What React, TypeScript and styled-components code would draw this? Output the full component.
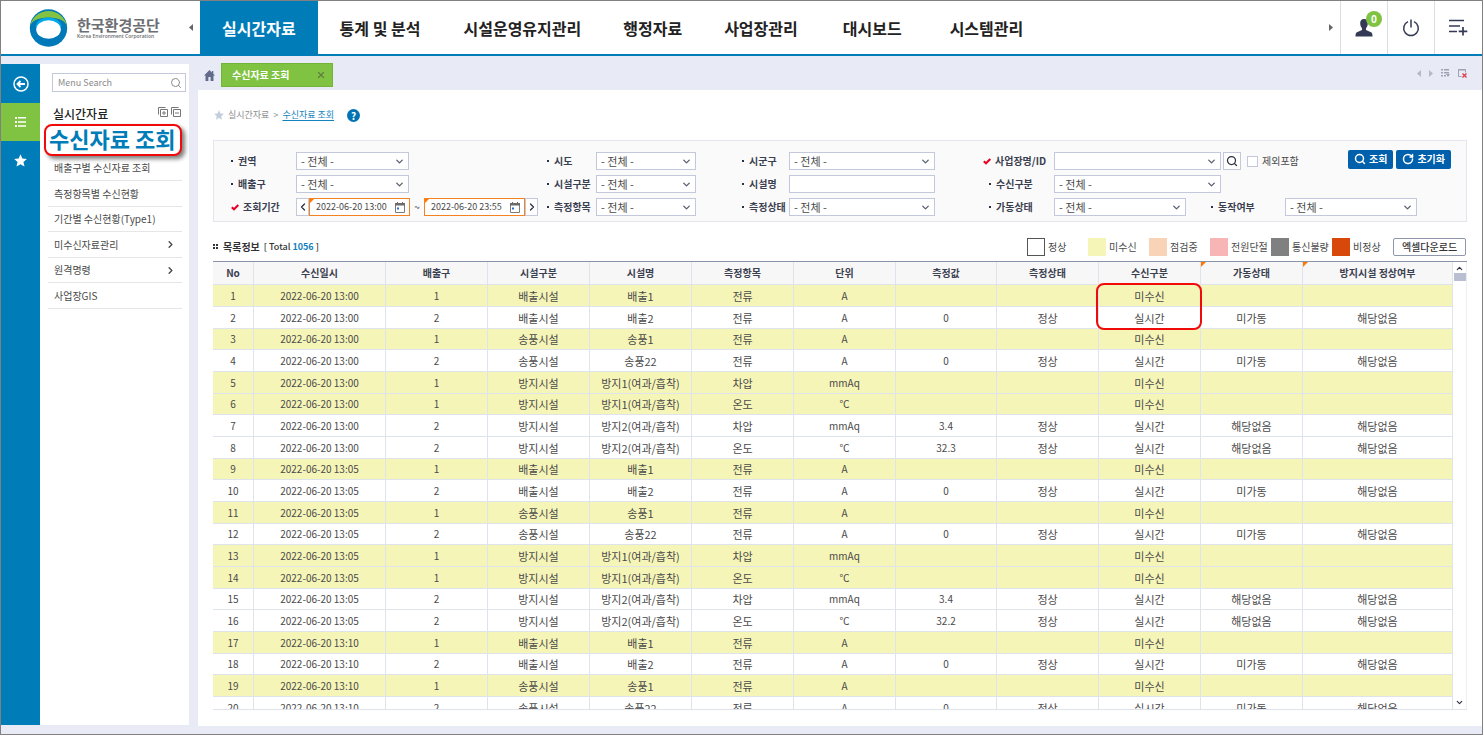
import React from 'react';
import styled, { createGlobalStyle, css } from 'styled-components';
import { ChevronDown, ChevronLeft, ChevronRight, ChevronUp, RotateCw, Search, X } from 'lucide-react';

const c = {
  blue: '#007cb8',
  link: '#1482bd',
  action: '#0060ab',
  green: '#80c342',
  lavender: '#e8ebf5',
  line: '#dfe3ec',
  field: '#c3c8dc',
  ink: '#2b3042',
  text: '#4a4a4a',
  orange: '#f58220',
  yellow: '#f6f5b8',
  navy: '#343a55',
};

const GlobalStyle = createGlobalStyle`
  *, *::before, *::after { box-sizing: border-box; }
  body {
    margin: 0;
    font-family: 'Noto Sans CJK KR', sans-serif;
    font-size: 10px;
    line-height: 16px;
    color: ${c.text};
    background: ${c.lavender};
  }
  button, input, select { font: inherit; color: inherit; margin: 0; }
  button { border: 0; padding: 0; background: none; cursor: pointer; }
  a { color: inherit; text-decoration: none; }
  ul { list-style: none; margin: 0; padding: 0; }
  svg { display: block; flex: none; }
`;

const Frame = styled.div`
  display: flex;
  flex-direction: column;
  height: 100vh;
  border: 1px solid #808080;
  background: ${c.lavender};
  overflow: hidden;
`;

/* ---------- header ---------- */
const Header = styled.header`
  display: flex;
  flex: none;
  height: 55px;
  padding-right: 1px;
  background: #fff;
  border-bottom: 2px solid ${c.blue};
`;

const Brand = styled.a`
  display: flex;
  align-items: center;
  gap: 9px;
  width: 181px;
  padding-left: 28px;
`;

const BrandText = styled.span`
  display: flex;
  flex-direction: column;
`;

const BrandName = styled.strong`
  font-size: 15px;
  line-height: 16px;
  color: #6d6e71;
`;

const BrandSub = styled.span`
  font: 600 5px/6px 'Open Sans', sans-serif;
  color: #6d6e71;
  white-space: nowrap;
`;

const ArrowButton = styled.button`
  display: grid;
  place-items: center;
  width: 18px;
`;

const Nav = styled.nav`
  display: flex;
  flex: 1;
`;

const NavLink = styled.a<{ $active?: boolean; $pad: number }>`
  display: flex;
  align-items: center;
  padding: 0 ${(p) => p.$pad}px;
  font-size: 16px;
  font-weight: 700;
  color: ${(p) => (p.$active ? '#fff' : '#222')};
  background: ${(p) => (p.$active ? c.blue : 'transparent')};
  white-space: nowrap;
`;

const HeaderTool = styled.button`
  position: relative;
  display: grid;
  place-items: center;
  width: 47px;
  border-left: 1px solid #dcdde3;
`;

const Badge = styled.span`
  position: absolute;
  top: 10px;
  right: 5px;
  width: 16px;
  height: 16px;
  border-radius: 50%;
  background: ${c.green};
  color: #fff;
  font-size: 10px;
  font-weight: 700;
  line-height: 15px;
`;

/* ---------- left side ---------- */
const Body = styled.div`
  display: flex;
  flex: 1;
  min-height: 0;
  padding-bottom: 8px;
`;

const Rail = styled.div`
  flex: none;
  width: 39px;
  margin: 8px 0 1px;
  padding-top: 1px;
  background: ${c.blue};
`;

const RailButton = styled.button<{ $active?: boolean }>`
  display: grid;
  place-items: center;
  width: 100%;
  height: 38px;
  color: #fff;
  background: ${(p) => (p.$active ? c.green : 'transparent')};
`;

const Sidebar = styled.aside`
  flex: none;
  width: 149px;
  margin: 8px 0 1px;
  padding: 9px 3px 0 8px;
  background: #fff;
`;

const MenuSearch = styled.label`
  display: flex;
  align-items: center;
  height: 19px;
  margin-left: 4px;
  padding: 0 3px 0 5px;
  border: 1px solid ${c.field};
  color: #8b8b8b;
`;

const MenuInput = styled.input`
  flex: 1;
  min-width: 0;
  height: 17px;
  padding: 0;
  border: 0;
  outline: 0;
  background: none;
  font-size: 9px;
  &::placeholder { color: #8b8b8b; opacity: 1; }
`;

const MenuHead = styled.div`
  display: flex;
  align-items: center;
  height: 20px;
  margin-top: 12px;
  padding: 0 5px;
`;

const MenuTitle = styled.h2`
  flex: 1;
  margin: 0;
  font-size: 12px;
  font-weight: 500;
  color: #222;
`;

const SmallTools = styled.div`
  display: flex;
  gap: 3px;
  padding-bottom: 4px;
`;

const CurrentMenu = styled.a`
  display: flex;
  align-items: center;
  height: 32px;
  margin: 0 4px 0 -4px;
  padding: 0 0 4px 3px;
  border: 2px solid #f00a0a;
  border-radius: 8px;
  background: #fff;
  box-shadow: 3px 3px 4px rgba(0, 0, 0, 0.5);
  font-size: 22px;
  font-weight: 700;
  color: ${c.blue};
  white-space: nowrap;
`;

const MenuItem = styled.li`
  display: flex;
  align-items: center;
  justify-content: space-between;
  height: 25px;
  margin-right: 4px;
  padding: 0 6px;
  border-bottom: 1px solid #e6e6e8;
  &:nth-child(even) { height: 26px; }
`;

/* ---------- main ---------- */
const Main = styled.main`
  display: flex;
  flex-direction: column;
  flex: 1;
  min-width: 0;
  margin-left: 8px;
`;

const TabBar = styled.div`
  display: flex;
  align-items: center;
  flex: none;
  height: 34px;
  padding: 4px 15px 0 7px;
`;

const Tab = styled.div`
  display: flex;
  align-items: center;
  justify-content: space-between;
  width: 112px;
  height: 24px;
  margin: 0 auto 0 6px;
  padding: 0 6px 0 10px;
  border: 1px solid #72b338;
  background: ${c.green};
  color: #fff;
  font-weight: 700;
`;

const TabClose = styled.button`
  color: #5e7f3f;
`;

const TabTools = styled.div`
  display: flex;
  align-items: center;
  gap: 8px;
  padding-bottom: 4px;
  color: #9da2b5;
`;

const Content = styled.section`
  display: flex;
  flex-direction: column;
  flex: 1;
  min-height: 0;
  margin-left: 1px;
  padding: 0 15px 16px;
  background: #fff;
`;

const Breadcrumb = styled.nav`
  display: flex;
  align-items: center;
  flex: none;
  gap: 4px;
  height: 50px;
  padding-left: 1px;
  font-size: 9px;
  color: #8d8d8d;
`;

const CrumbLink = styled.a`
  color: ${c.link};
  text-decoration: underline;
  text-underline-offset: 2px;
`;

const Help = styled.button`
  width: 13px;
  height: 13px;
  margin-left: 9px;
  border-radius: 50%;
  background: #0073b5;
  color: #fff;
  font-size: 10px;
  font-weight: 700;
  line-height: 13px;
`;

const Filters = styled.form`
  display: grid;
  flex: none;
  grid-template-columns: 65px 251px 49px 146px 47px 194px 71px 1fr;
  grid-auto-rows: 18px;
  row-gap: 5px;
  padding: 11px 15px 5px 17px;
  border: 1px solid #e3e6ef;
  background: #fafafa;
`;

const FieldLabel = styled.label<{ $indent?: boolean }>`
  display: flex;
  align-items: center;
  gap: 4px;
  padding-left: ${(p) => (p.$indent ? 6 : 0)}px;
  font-weight: 700;
  color: #3b4050;
  white-space: nowrap;
`;

const Dot = styled.i`
  width: 2px;
  height: 2px;
  margin-right: 1px;
  background: ${c.ink};
`;

const Cell = styled.div`
  display: flex;
  align-items: center;
  min-width: 0;
`;

const fieldBox = css`
  height: 18px;
  border: 1px solid ${c.field};
  background: #fff;
`;

const SelectBox = styled.span<{ $w: number }>`
  position: relative;
  display: block;
  flex: none;
  width: ${(p) => p.$w}px;
  svg { position: absolute; right: 4px; top: 4px; pointer-events: none; color: #5a6072; }
`;

const SelectInput = styled.select`
  ${fieldBox}
  display: block;
  appearance: none;
  width: 100%;
  padding: 0 16px 0 4px;
  border-radius: 0;
  font-size: 11px;
  line-height: 14px;
`;

const TextInput = styled.input`
  ${fieldBox}
  width: 146px;
  padding: 0 4px;
`;

const StepButton = styled.button`
  ${fieldBox}
  display: grid;
  place-items: center;
  width: 13px;
  color: ${c.ink};
`;

const corner = (size: number) => css`
  &::before {
    content: '';
    position: absolute;
    top: 0;
    left: 0;
    border-top: ${size}px solid #ff7800;
    border-right: ${size}px solid transparent;
  }
`;

const DateBox = styled.span`
  position: relative;
  display: flex;
  align-items: center;
  width: 101px;
  height: 18px;
  padding: 0 4px 0 6px;
  border: 1px solid ${c.orange};
  background: #fff;
  ${corner(4)}
`;

const DateInput = styled.input`
  flex: 1;
  min-width: 0;
  height: 16px;
  padding: 0;
  border: 0;
  outline: 0;
  background: none;
  font-size: 9px;
`;

const Tilde = styled.span`
  width: 14px;
  text-align: center;
`;

const LookupButton = styled.button`
  ${fieldBox}
  display: grid;
  place-items: center;
  width: 18px;
  margin: 0 6px 0 2px;
  color: ${c.ink};
`;

const CheckLabel = styled.label`
  display: flex;
  align-items: center;
  gap: 4px;
`;

const CheckBox = styled.input`
  appearance: none;
  width: 11px;
  height: 11px;
  border: 1px solid ${c.field};
  background: #fff;
`;

const Actions = styled.div`
  display: flex;
  gap: 3px;
  margin-left: auto;
  padding-bottom: 4px;
`;

const ActionButton = styled.button`
  display: flex;
  align-items: center;
  gap: 3px;
  height: 19px;
  padding: 0 6px;
  border-radius: 2px;
  background: ${c.action};
  color: #fff;
  font-weight: 700;
`;

const SecondLabel = styled.div`
  width: 74px;
  margin-left: 25px;
`;

const ListHead = styled.div`
  display: flex;
  align-items: center;
  flex: none;
  height: 39px;
  padding: 11px 1px 0 0;
`;

const ListTitle = styled.h3`
  display: flex;
  align-items: center;
  gap: 4px;
  margin: 0 auto 0 0;
  font-size: 10px;
  font-weight: 700;
  color: #333;
`;

const Count = styled.span`
  font-size: 9px;
  font-weight: 500;
  b { color: ${c.link}; font-weight: 700; }
`;

const Legend = styled.ul`
  display: flex;
`;

const LegendItem = styled.li`
  display: flex;
  align-items: center;
  gap: 3px;
  width: 61px;
  white-space: nowrap;
`;

const Swatch = styled.i<{ $color: string; $outlined?: boolean }>`
  width: 18px;
  height: 18px;
  background: ${(p) => p.$color};
  border: 1px solid ${(p) => (p.$outlined ? '#555' : p.$color)};
`;

const ExcelButton = styled.button`
  height: 18px;
  width: 73px;
  border: 1px solid #8f97ad;
  border-radius: 2px;
  background: #fff;
  font-weight: 500;
  line-height: 14px;
  color: #333;
`;

const Grid = styled.div`
  display: flex;
  flex: 1;
  min-height: 0;
  border-top: 1px solid #8a93ab;
  border-bottom: 1px solid ${c.line};
`;

const Viewport = styled.div`
  flex: 1;
  min-width: 0;
  overflow: hidden;
`;

const Table = styled.table`
  width: 100%;
  table-layout: fixed;
  border-collapse: separate;
  border-spacing: 0;
  text-align: center;
`;

const Th = styled.th<{ $marked?: boolean }>`
  position: relative;
  height: 23px;
  padding: 0;
  border-right: 1px solid ${c.line};
  border-bottom: 1px solid ${c.line};
  background: #f7f7f7;
  font-weight: 700;
  color: #3b4050;
  ${(p) => p.$marked && corner(5)}
`;

const Row = styled.tr<{ $missing?: boolean }>`
  height: 22px;
  background: ${(p) => (p.$missing ? c.yellow : '#fff')};
  &:nth-child(3n) { height: 21px; }
`;

const Td = styled.td<{ $latin?: boolean }>`
  position: relative;
  padding: 0;
  border-right: 1px solid ${c.line};
  border-bottom: 1px solid ${c.line};
  font-size: ${(p) => (p.$latin ? 10 : 11)}px;
`;

const Highlight = styled.span`
  position: absolute;
  z-index: 1;
  top: -2px;
  left: -3px;
  right: -2px;
  height: 47px;
  border: 2px solid #f00a0a;
  border-radius: 8px;
  pointer-events: none;
`;

const ScrollTrack = styled.div`
  display: flex;
  flex-direction: column;
  align-items: center;
  flex: none;
  width: 14px;
  padding: 2px 0 2px;
  border-right: 1px solid #eceef4;
  color: ${c.ink};
`;

const ScrollThumb = styled.div`
  width: 12px;
  height: 8px;
  margin-bottom: auto;
  background: #b9bed0;
`;

/* ---------- drawings ---------- */
const Logo = () => (
  <svg width="39" height="38" viewBox="0 0 39 38" aria-hidden="true">
    <circle cx="19.5" cy="19" r="18.7" fill="#0079b8" />
    <path d="M1 18A18.7 18.7 0 0 1 38 18C37 12 30 8.500 19.500 8.500S2 12 1 18Z" fill="#84c341" />
    <path d="M19.500 8.500C12 8.500 7.500 12 6.500 18H32.500C31.500 12 27 8.500 19.500 8.500Z" fill="#00a8e8" />
    <ellipse cx="19.500" cy="20.500" rx="12.300" ry="9.300" fill="#fff" />
  </svg>
);

const Triangle = ({ left, color = '#666' }: { left?: boolean; color?: string }) => (
  <svg width="4" height="7" viewBox="0 0 4 7" aria-hidden="true">
    <path d={left ? 'M4 0V7L0 3.500Z' : 'M0 0V7L4 3.500Z'} fill={color} />
  </svg>
);

const Star = ({ size, color }: { size: number; color: string }) => (
  <svg width={size} height={size} viewBox="0 0 12 12" aria-hidden="true">
    <path d="M6 .3 7.700 4.200 11.900 4.600 8.700 7.400 9.700 11.600 6 9.400 2.300 11.600 3.300 7.400.1 4.600 4.300 4.200Z" fill={color} />
  </svg>
);

const Person = () => (
  <svg width="18" height="18" viewBox="0 0 18 18" aria-hidden="true">
    <path d="M9 0C11.600 0 13 1.800 12.800 4.600C12.700 6.700 12 8.200 11 9.300V11L16 13.200C17.200 13.800 17.500 15 17.500 17.500H.5C.5 15 .8 13.800 2 13.200L7 11V9.300C6 8.200 5.300 6.700 5.200 4.600C5 1.800 6.400 0 9 0Z" fill={c.navy} />
  </svg>
);

const PowerIcon = () => (
  <svg width="18" height="18" viewBox="0 0 18 18" fill="none" stroke={c.navy} strokeWidth="1.500" aria-hidden="true">
    <path d="M6 2.600A7.300 7.300 0 1 0 12 2.600M9 .5V8.500" />
  </svg>
);

const ListPlus = () => (
  <svg width="19" height="17" viewBox="0 0 19 17" fill="none" stroke={c.navy} strokeWidth="1.700" aria-hidden="true">
    <path d="M0 1.500H15M0 7H11M0 12.500H8M14 8V16.500M9.700 12.300H18.300" />
  </svg>
);

const BackIcon = () => (
  <svg width="16" height="16" viewBox="0 0 16 16" fill="none" stroke="#fff" strokeWidth="1.500" aria-hidden="true">
    <circle cx="8" cy="8" r="7" />
    <path d="M12 8H5M7.500 5 4.500 8 7.500 11" strokeWidth="1.800" />
  </svg>
);

const ListIcon = () => (
  <svg width="11" height="10" viewBox="0 0 11 10" fill="#fff" aria-hidden="true">
    <path d="M0 0H2V2H0ZM3 0H11V1.500H3ZM0 4H2V6H0ZM3 4.200H11V5.700H3ZM0 8H2V10H0ZM3 8.300H11V9.800H3Z" />
  </svg>
);

const HomeIcon = () => (
  <svg width="11" height="11" viewBox="0 0 11 11" fill="#626b8c" aria-hidden="true">
    <path d="M5.500 0 0 5.600H1.500V11H4.400V7H6.600V11H9.500V5.600H11L9.300 3.800V1H7.900V2.400Z" />
  </svg>
);

const TreeIcon = ({ plus }: { plus?: boolean }) => (
  <svg width="10" height="10" viewBox="0 0 10 10" fill="none" stroke="#777" aria-hidden="true">
    <path d={`M2.500 2.500H9.500V9.500H2.500ZM.5 7.500V.5H7.500M4 6H8${plus ? 'M6 4V8' : ''}`} />
  </svg>
);

const RequiredMark = () => (
  <svg width="8" height="7" viewBox="0 0 8 7" fill="none" stroke="#e60023" strokeWidth="2" aria-hidden="true">
    <path d="M.8 3.200 3 5.300 7.300 1" />
  </svg>
);

const Calendar = () => (
  <svg width="10" height="11" viewBox="0 0 10 11" aria-hidden="true">
    <path d="M.5 2V10.500H9.500V2Z" fill="#fff" stroke="#7b7b7b" />
    <path d="M0 1H10V3.500H0ZM2 0H3V2H2ZM7 0H8V2H7Z" fill="#6b6b6b" />
    <path d="M2 5.500H4V7.500H2Z" fill="#2a6fd6" />
  </svg>
);

const TabListIcon = () => (
  <svg width="9" height="8" viewBox="0 0 9 8" fill="#9da2b5" aria-hidden="true">
    <path d="M0 0H2V1.500H0ZM3 0H8V1.500H3ZM0 3H2V4.500H0ZM3 3H8V4.500H3ZM0 6H2V7.500H0ZM3 6H5V7.500H3ZM5 5H9L7 8Z" />
  </svg>
);

const CloseAllIcon = () => (
  <svg width="9" height="9" viewBox="0 0 9 9" fill="none" aria-hidden="true">
    <path d="M3.500 7.500H.5V.5H7.500V3.500M0 1H8" stroke="#9da2b5" />
    <path d="M4.500 4.500 8.500 8.500M8.500 4.500 4.500 8.500" stroke="#e23b4a" strokeWidth="1.400" />
  </svg>
);

const ListBullet = () => (
  <svg width="6" height="6" viewBox="0 0 6 6" fill="#333" aria-hidden="true">
    <path d="M0 0H2V2H0ZM3 0H5V2H3ZM0 3H2V5H0ZM3 3H5V5H3Z" />
  </svg>
);

/* ---------- data ---------- */
const navItems = [
  { name: '실시간자료', pad: 22 },
  { name: '통계 및 분석', pad: 22 },
  { name: '시설운영유지관리', pad: 21 },
  { name: '행정자료', pad: 21 },
  { name: '사업장관리', pad: 21 },
  { name: '대시보드', pad: 24 },
  { name: '시스템관리', pad: 24 },
];

const menuItems = [
  { name: '배출구별 수신자료 조회' },
  { name: '측정항목별 수신현황' },
  { name: '기간별 수신현황(Type1)' },
  { name: '미수신자료관리', nested: true },
  { name: '원격명령', nested: true },
  { name: '사업장GIS' },
];

const legend = [
  { name: '정상', color: '#ffffff', outlined: true },
  { name: '미수신', color: '#f6f5b8' },
  { name: '점검중', color: '#f8d3b6' },
  { name: '전원단절', color: '#f8b5b6' },
  { name: '통신불량', color: '#808080' },
  { name: '비정상', color: '#d9480b' },
];

const columns: { name: string; width?: number; marked?: boolean; latin?: boolean }[] = [
  { name: 'No', width: 41, latin: true },
  { name: '수신일시', width: 132, latin: true },
  { name: '배출구', width: 102, latin: true },
  { name: '시설구분', width: 102 },
  { name: '시설명', width: 102 },
  { name: '측정항목', width: 102 },
  { name: '단위', width: 102, latin: true },
  { name: '측정값', width: 101, latin: true },
  { name: '측정상태', width: 102 },
  { name: '수신구분', width: 102 },
  { name: '가동상태', width: 102, marked: true },
  { name: '방지시설 정상여부', marked: true },
];

const NONE = '해당없음';
const cycle = [
  ['1', '배출시설', '배출1', '전류', 'A'],
  ['2', '배출시설', '배출2', '전류', 'A', '0', '미가동'],
  ['1', '송풍시설', '송풍1', '전류', 'A'],
  ['2', '송풍시설', '송풍22', '전류', 'A', '0', '미가동'],
  ['1', '방지시설', '방지1(여과/흡착)', '차압', 'mmAq'],
  ['1', '방지시설', '방지1(여과/흡착)', '온도', '℃'],
  ['2', '방지시설', '방지2(여과/흡착)', '차압', 'mmAq', '3.4', NONE],
  ['2', '방지시설', '방지2(여과/흡착)', '온도', '℃', '32.3', NONE],
];
const times = ['13:00', '13:05', '13:10'];

const rows = Array.from({ length: 20 }, (_, i) => {
  const [outlet, kind, facility, item, unit, value, running] = cycle[i % 8];
  const shown = i === 15 ? '32.2' : value;
  const received = value !== undefined;
  return {
    missing: !received,
    cells: [
      String(i + 1),
      `2022-06-20 ${times[Math.floor(i / 8)]}`,
      outlet,
      kind,
      facility,
      item,
      unit,
      shown ?? '',
      received ? '정상' : '',
      received ? '실시간' : '미수신',
      running ?? '',
      received ? NONE : '',
    ],
  };
});

/* ---------- composed parts ---------- */
const Label = ({ id, text, required, indent }: { id: string; text: string; required?: boolean; indent?: boolean }) => (
  <FieldLabel htmlFor={id} $indent={indent}>
    {required ? <RequiredMark /> : <Dot />}
    {text}
  </FieldLabel>
);

const Select = ({ id, width, empty }: { id: string; width: number; empty?: boolean }) => (
  <SelectBox $w={width}>
    <SelectInput id={id}>
      <option>{empty ? '' : '- 전체 -'}</option>
    </SelectInput>
    <ChevronDown size={11} strokeWidth={3} />
  </SelectBox>
);

const DateField = ({ id, value, label }: { id: string; value: string; label: string }) => (
  <DateBox>
    <DateInput id={id} defaultValue={value} aria-label={label} />
    <Calendar />
  </DateBox>
);

export default function App() {
  return (
    <>
      <GlobalStyle />
      <Frame>
        <Header>
          <Brand href="#">
            <Logo />
            <BrandText>
              <BrandName>한국환경공단</BrandName>
              <BrandSub>Korea Environment Corporation</BrandSub>
            </BrandText>
          </Brand>
          <ArrowButton aria-label="이전 메뉴"><Triangle left /></ArrowButton>
          <Nav>
            {navItems.map((item, i) => (
              <NavLink key={item.name} href="#" $active={i === 0} $pad={item.pad}>{item.name}</NavLink>
            ))}
          </Nav>
          <ArrowButton aria-label="다음 메뉴"><Triangle /></ArrowButton>
          <HeaderTool aria-label="사용자"><Person /><Badge>0</Badge></HeaderTool>
          <HeaderTool aria-label="로그아웃"><PowerIcon /></HeaderTool>
          <HeaderTool aria-label="전체 메뉴"><ListPlus /></HeaderTool>
        </Header>

        <Body>
          <Rail>
            <RailButton aria-label="접기"><BackIcon /></RailButton>
            <RailButton aria-label="메뉴" $active><ListIcon /></RailButton>
            <RailButton aria-label="즐겨찾기"><Star size={13} color="#fff" /></RailButton>
          </Rail>

          <Sidebar>
            <MenuSearch>
              <MenuInput placeholder="Menu Search" aria-label="Menu Search" />
              <Search size={12} />
            </MenuSearch>
            <MenuHead>
              <MenuTitle>실시간자료</MenuTitle>
              <SmallTools>
                <button aria-label="모두 펼치기"><TreeIcon plus /></button>
                <button aria-label="모두 접기"><TreeIcon /></button>
              </SmallTools>
            </MenuHead>
            <CurrentMenu href="#">수신자료 조회</CurrentMenu>
            <ul>
              {menuItems.map((m) => (
                <MenuItem key={m.name}>
                  <a href="#">{m.name}</a>
                  {m.nested && <ChevronRight size={11} strokeWidth={3} />}
                </MenuItem>
              ))}
            </ul>
          </Sidebar>

          <Main>
            <TabBar>
              <HomeIcon />
              <Tab>
                수신자료 조회
                <TabClose aria-label="탭 닫기"><X size={10} strokeWidth={3} /></TabClose>
              </Tab>
              <TabTools>
                <Triangle left color="#b4b8c8" />
                <Triangle color="#b4b8c8" />
                <TabListIcon />
                <CloseAllIcon />
              </TabTools>
            </TabBar>

            <Content>
              <Breadcrumb>
                <Star size={10} color="#c3cddd" />
                <span>실시간자료</span>
                <span>&gt;</span>
                <CrumbLink href="#">수신자료 조회</CrumbLink>
                <Help>?</Help>
              </Breadcrumb>

              <Filters onSubmit={(e) => e.preventDefault()}>
                <Label id="region" text="권역" />
                <Cell><Select id="region" width={113} /></Cell>
                <Label id="city" text="시도" />
                <Cell><Select id="city" width={100} /></Cell>
                <Label id="district" text="시군구" />
                <Cell><Select id="district" width={146} /></Cell>
                <Label id="site" text="사업장명/ID" required />
                <Cell>
                  <Select id="site" width={167} empty />
                  <LookupButton type="button" aria-label="사업장 찾기"><Search size={12} strokeWidth={2.5} /></LookupButton>
                  <CheckLabel><CheckBox type="checkbox" />제외포함</CheckLabel>
                  <Actions>
                    <ActionButton type="submit"><Search size={12} strokeWidth={3} />조회</ActionButton>
                    <ActionButton type="reset"><RotateCw size={12} strokeWidth={3} />초기화</ActionButton>
                  </Actions>
                </Cell>

                <Label id="outlet" text="배출구" />
                <Cell><Select id="outlet" width={113} /></Cell>
                <Label id="kind" text="시설구분" />
                <Cell><Select id="kind" width={100} /></Cell>
                <Label id="facility" text="시설명" />
                <Cell><TextInput id="facility" /></Cell>
                <Label id="receive" text="수신구분" indent />
                <Cell><Select id="receive" width={167} /></Cell>

                <Label id="from" text="조회기간" required />
                <Cell>
                  <StepButton type="button" aria-label="이전 기간"><ChevronLeft size={12} strokeWidth={2.5} /></StepButton>
                  <DateField id="from" value="2022-06-20 13:00" label="시작 일시" />
                  <Tilde>~</Tilde>
                  <DateField id="to" value="2022-06-20 23:55" label="종료 일시" />
                  <StepButton type="button" aria-label="다음 기간"><ChevronRight size={12} strokeWidth={2.5} /></StepButton>
                </Cell>
                <Label id="item" text="측정항목" />
                <Cell><Select id="item" width={100} /></Cell>
                <Label id="state" text="측정상태" />
                <Cell><Select id="state" width={146} /></Cell>
                <Label id="running" text="가동상태" indent />
                <Cell>
                  <Select id="running" width={132} />
                  <SecondLabel><Label id="working" text="동작여부" /></SecondLabel>
                  <Select id="working" width={132} />
                </Cell>
              </Filters>

              <ListHead>
                <ListTitle>
                  <ListBullet />
                  목록정보
                  <Count>[ Total <b>1056</b> ]</Count>
                </ListTitle>
                <Legend>
                  {legend.map((l) => (
                    <LegendItem key={l.name}>
                      <Swatch $color={l.color} $outlined={l.outlined} />
                      {l.name}
                    </LegendItem>
                  ))}
                </Legend>
                <ExcelButton>엑셀다운로드</ExcelButton>
              </ListHead>

              <Grid>
                <Viewport>
                  <Table>
                    <colgroup>
                      {columns.map((col) => <col key={col.name} width={col.width} />)}
                    </colgroup>
                    <thead>
                      <tr>
                        {columns.map((col) => <Th key={col.name} $marked={col.marked}>{col.name}</Th>)}
                      </tr>
                    </thead>
                    <tbody>
                      {rows.map((row, r) => (
                        <Row key={r} $missing={row.missing}>
                          {row.cells.map((cell, i) => (
                            <Td key={i} $latin={columns[i].latin}>
                              {cell}
                              {r === 0 && i === 9 && <Highlight />}
                            </Td>
                          ))}
                        </Row>
                      ))}
                    </tbody>
                  </Table>
                </Viewport>
                <ScrollTrack>
                  <ChevronUp size={9} strokeWidth={3} />
                  <ScrollThumb />
                  <ChevronDown size={9} strokeWidth={3} />
                </ScrollTrack>
              </Grid>
            </Content>
          </Main>
        </Body>
      </Frame>
    </>
  );
}
